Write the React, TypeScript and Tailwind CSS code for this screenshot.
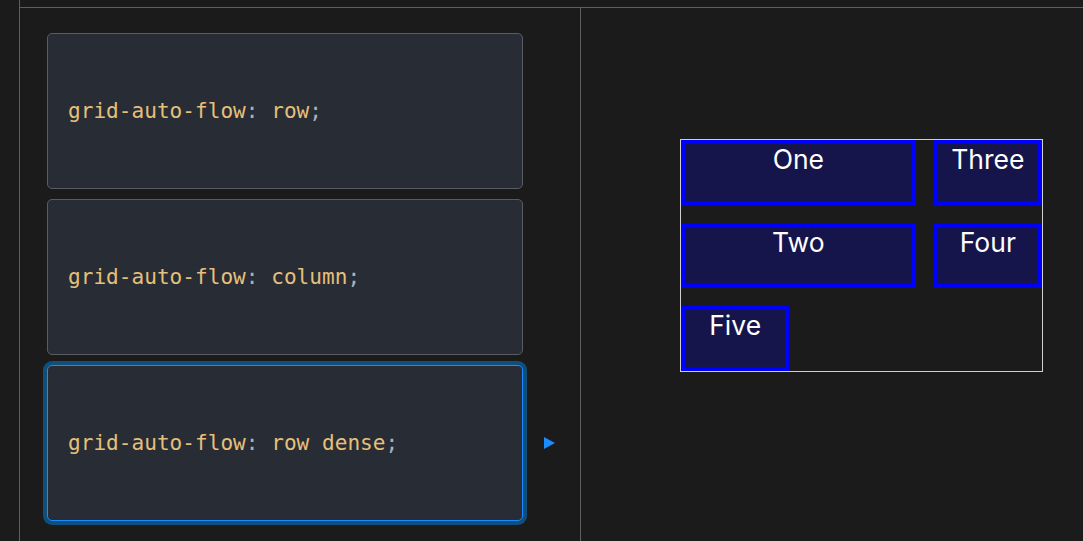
import React from "react";

const Card = ({ value, active }: { value: string; active?: boolean }) => (
  <div className="flex items-center gap-0">
    <div
      className={
        "flex h-[156px] w-[476px] items-center rounded-[5px] bg-[#282c34] px-[20px] " +
        (active
          ? "border border-[#1a8cff] shadow-[0_0_0_4px_#0f4f7d]"
          : "border border-[#595d63]")
      }
    >
      <span
        className="text-[21.1px] leading-none text-[#e5c07b]"
        style={{ fontFamily: '"DejaVu Sans Mono", "Liberation Mono", monospace' }}
      >
        grid-auto-flow<span className="text-[#abb2bf]">:</span> {value}
        <span className="text-[#abb2bf]">;</span>
      </span>
    </div>
    {active ? (
      <div className="ml-[21px] h-0 w-0 border-y-[6px] border-l-[11px] border-y-transparent border-l-[#1a8cff]" />
    ) : null}
  </div>
);

const Item = ({ label, className }: { label: string; className?: string }) => (
  <div
    className={
      "flex justify-center border-[4px] border-[#0000ff] bg-[#15154b] pt-[1px] text-[26.5px] leading-[28px] text-white " +
      (className ?? "")
    }
    style={{ fontFamily: "Inter, Roboto, sans-serif" }}
  >
    {label}
  </div>
);

export default function App() {
  return (
    <div className="flex h-[541px] w-full overflow-hidden bg-[#1b1b1b]">
      <div className="w-[20px] shrink-0 border-r border-[#5e5e5e]" />
      <div className="flex flex-1 flex-col">
        <div className="h-[8px] shrink-0 border-b border-[#5e5e5e]" />
        <div className="flex flex-1">
          <div className="flex w-[561px] shrink-0 flex-col gap-[10px] border-r border-[#5e5e5e] pl-[27px] pt-[25px]">
            <Card value="row" />
            <Card value="column" />
            <Card value="row dense" active />
          </div>
          <div className="flex-1 pl-[99px] pt-[131px]">
            <div className="grid w-[363px] grid-cols-3 grid-rows-[65px_65px_65px] gap-x-[18px] gap-y-[18px] border border-[#d0d0d0]">
              <Item label="One" className="col-span-2" />
              <Item label="Three" />
              <Item label="Two" className="col-span-2" />
              <Item label="Four" />
              <Item label="Five" />
            </div>
          </div>
        </div>
      </div>
    </div>
  );
}
